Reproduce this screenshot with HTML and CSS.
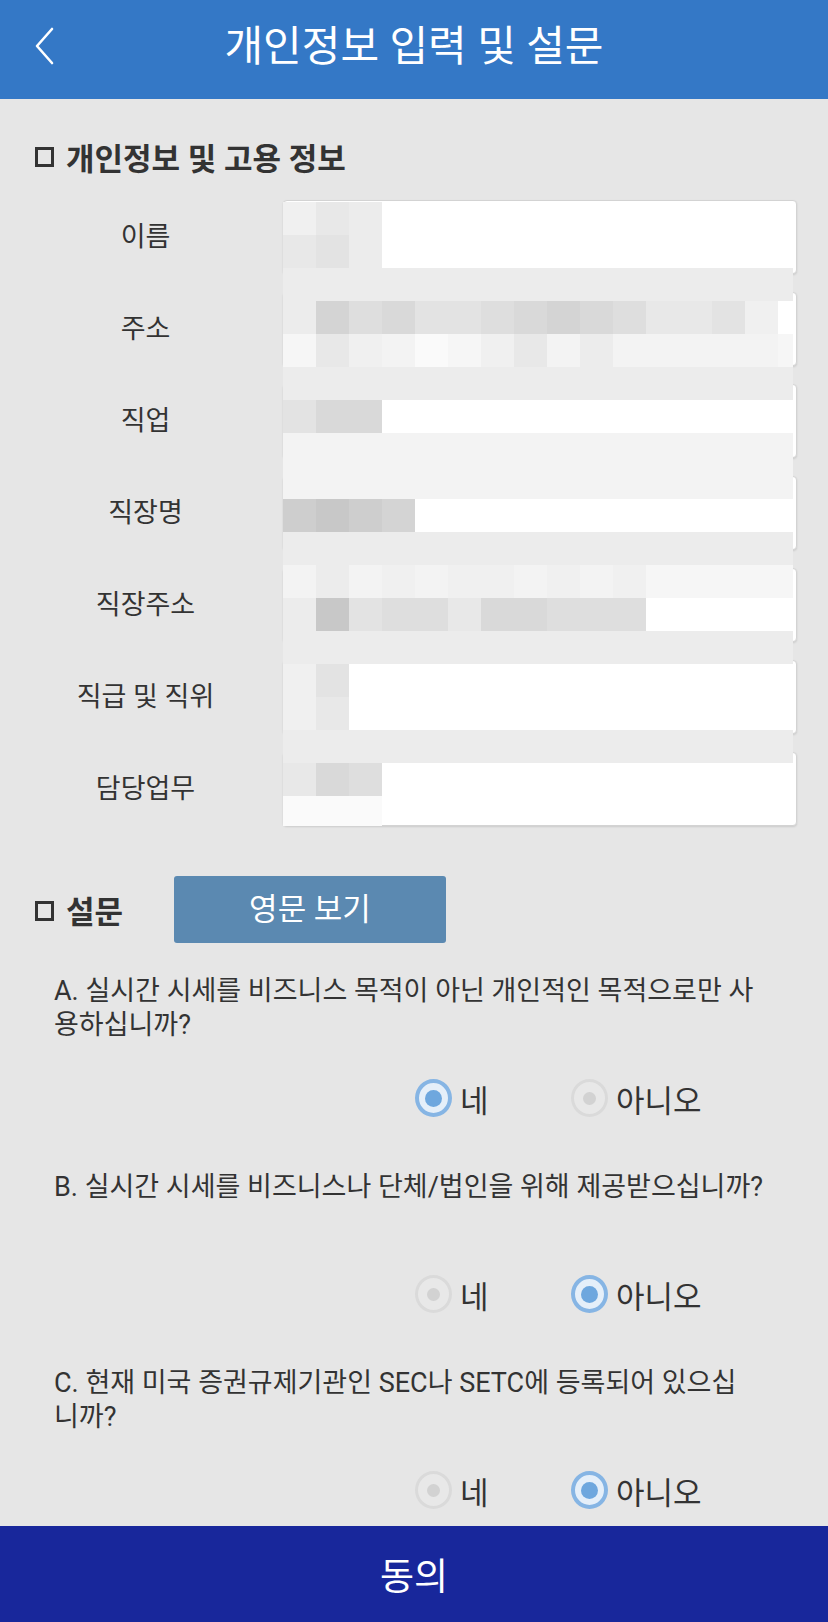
FILE: index.html
```html
<!DOCTYPE html>
<html lang="ko">

<head>
    <meta charset="UTF-8">
    <title>개인정보 입력 및 설문</title>
    <link rel="stylesheet" href="styles.css">
</head>

<body>
<header class="top-bar">
    <button class="back-btn" aria-label="뒤로">
        <svg width="20" height="38" viewBox="0 0 20 38">
            <polyline points="17,2 2,19 17,36" fill="none" stroke="#fff" stroke-width="2.6" stroke-linecap="round" stroke-linejoin="round"/>
        </svg>
    </button>
    <h1 class="top-title">개인정보 입력 및 설문</h1>
</header>

<main class="content">
    <section class="info-section">
        <h2 class="section-title"><span class="check-box"></span>개인정보 및 고용 정보</h2>

        <div class="info-form">
            <div class="form-row"><label class="form-label">이름</label><div class="form-input"></div></div>
            <div class="form-row"><label class="form-label">주소</label><div class="form-input"></div></div>
            <div class="form-row"><label class="form-label">직업</label><div class="form-input"></div></div>
            <div class="form-row"><label class="form-label">직장명</label><div class="form-input"></div></div>
            <div class="form-row"><label class="form-label">직장주소</label><div class="form-input"></div></div>
            <div class="form-row"><label class="form-label">직급 및 직위</label><div class="form-input"></div></div>
            <div class="form-row"><label class="form-label">담당업무</label><div class="form-input"></div></div>

            <!-- 개인정보 모자이크 처리 -->
            <div class="mosaic">
                <div class="m3"></div><div class="m5"></div><div class="m4"></div><div class="gap"></div>
                <div class="m5"></div><div class="m6"></div><div class="m4"></div><div class="gap"></div>
                <div class="m4 band"></div>
                <div class="m4"></div><div class="m9"></div><div class="m7"></div><div class="m8"></div><div class="m6"></div><div class="m6"></div><div class="m7"></div><div class="m8"></div><div class="m9"></div><div class="m8"></div><div class="m7"></div><div class="m5"></div><div class="m5"></div><div class="m6"></div><div class="m3"></div><div class="w"></div>
                <div class="m1"></div><div class="m5"></div><div class="m3"></div><div class="m2"></div><div class="m0"></div><div class="m1"></div><div class="m3"></div><div class="m5"></div><div class="m2"></div><div class="m4"></div><div class="m2"></div><div class="m2"></div><div class="m2"></div><div class="m2"></div><div class="m2"></div><div class="m1"></div>
                <div class="m4 band"></div>
                <div class="m6"></div><div class="m8"></div><div class="m8"></div><div class="gap"></div>
                <div class="m2 band"></div>
                <div class="m2 band"></div>
                <div class="m10"></div><div class="m11"></div><div class="m10"></div><div class="m9"></div><div class="gap"></div>
                <div class="m4 band"></div>
                <div class="m2"></div><div class="m4"></div><div class="m2"></div><div class="m3"></div><div class="m2"></div><div class="m3"></div><div class="m3"></div><div class="m2"></div><div class="m3"></div><div class="m2"></div><div class="m3"></div><div class="m1"></div><div class="m1"></div><div class="m1"></div><div class="m1"></div><div class="m1"></div>
                <div class="m4"></div><div class="m11"></div><div class="m6"></div><div class="m7"></div><div class="m7"></div><div class="m5"></div><div class="m8"></div><div class="m8"></div><div class="m7"></div><div class="m7"></div><div class="m7"></div><div class="gap"></div>
                <div class="m4 band"></div>
                <div class="m3"></div><div class="m6"></div><div class="gap"></div>
                <div class="m3"></div><div class="m5"></div><div class="gap"></div>
                <div class="m4 band"></div>
                <div class="m5"></div><div class="m8"></div><div class="m7"></div><div class="gap"></div>
                <div class="m0"></div><div class="m0"></div><div class="m0"></div><div class="gap"></div>
            </div>
        </div>
    </section>

    <section class="survey-section">
        <div class="survey-head">
            <h2 class="section-title survey-title"><span class="check-box"></span>설문</h2>
            <button class="lang-btn">영문 보기</button>
        </div>

        <div class="question">
            <p class="question-text">A. 실시간 시세를 비즈니스 목적이 아닌 개인적인 목적으로만 사<br>용하십니까?</p>
            <div class="answer-row">
                <label class="radio-option"><span class="radio checked"></span>네</label>
                <label class="radio-option"><span class="radio"></span>아니오</label>
            </div>
        </div>

        <div class="question">
            <p class="question-text">B. 실시간 시세를 비즈니스나 단체/법인을 위해 제공받으십니까?</p>
            <div class="answer-row">
                <label class="radio-option"><span class="radio"></span>네</label>
                <label class="radio-option"><span class="radio checked"></span>아니오</label>
            </div>
        </div>

        <div class="question">
            <p class="question-text">C. 현재 미국 증권규제기관인 SEC나 SETC에 등록되어 있으십<br>니까?</p>
            <div class="answer-row">
                <label class="radio-option"><span class="radio"></span>네</label>
                <label class="radio-option"><span class="radio checked"></span>아니오</label>
            </div>
        </div>
    </section>
</main>

<footer class="agree-bar">동의</footer>
</body>

</html>
```

FILE: styles.css
```css
body {
    font-family: Roboto, "Noto Sans CJK KR", sans-serif;
    margin: 0;
    height: 100vh;
    display: flex;
    flex-direction: column;
    background-color: #e6e6e6;
    color: #333;
}

.top-bar {
    flex: none;
    height: 99px;
    background-color: #3478c6;
    display: flex;
    align-items: center;
    justify-content: center;
    position: relative;
}

.back-btn {
    position: absolute;
    left: 35px;
    top: 27px;
    padding: 0;
    background: none;
    border: none;
    width: 20px;
    height: 38px;
}

.top-title {
    margin: 0 0 6px;
    color: white;
    font-size: 42px;
    font-weight: 400;
    line-height: 1;
}

.content {
    flex: 1;
    overflow: hidden;
    padding: 37px 0 0 0;
}

.section-title {
    display: flex;
    align-items: center;
    margin: 0;
    padding-left: 35px;
    height: 40px;
    font-size: 31px;
    font-weight: 700;
    color: #333;
}

.check-box {
    width: 13px;
    height: 14px;
    border: 3px solid #333;
    margin-right: 12px;
    margin-top: 2px;
}

/* 개인정보 입력 폼 */
.info-form {
    position: relative;
    margin: 24px 31px 0 8px;
    display: flex;
    flex-direction: column;
    gap: 18px;
}

.form-row {
    display: grid;
    grid-template-columns: 275px 1fr;
    align-items: center;
    height: 74px;
}

.form-label {
    text-align: center;
    font-size: 27px;
    color: #333;
    margin-top: -6px;
}

.form-input {
    height: 72px;
    background-color: white;
    border: 1px solid #d3d3d3;
    border-radius: 4px;
    box-shadow: 0 1px 2px rgba(0, 0, 0, 0.12);
}

.mosaic {
    position: absolute;
    left: 275px;
    top: 2px;
    width: 510px;
    height: 624px;
    overflow: hidden;
    display: grid;
    grid-template-columns: repeat(16, 33px);
    grid-auto-rows: 33px;
}

.mosaic .band { grid-column: span 16; }
.mosaic .gap { grid-column: auto / -1; }

.m0 { background-color: #fafafa; }
.m1 { background-color: #f6f6f6; }
.m2 { background-color: #f3f3f3; }
.m3 { background-color: #f0f0f0; }
.m4 { background-color: #ececec; }
.m5 { background-color: #e8e8e8; }
.m6 { background-color: #e3e3e3; }
.m7 { background-color: #dedede; }
.m8 { background-color: #d9d9d9; }
.m9 { background-color: #d4d4d4; }
.m10 { background-color: #cecece; }
.m11 { background-color: #c8c8c8; }
.w { background-color: #ffffff; }

/* 설문 */
.survey-head {
    display: flex;
    align-items: center;
    margin-top: 50px;
}

.survey-title {
    width: 139px;
}

.lang-btn {
    width: 272px;
    height: 67px;
    border: none;
    border-radius: 3px;
    background-color: #5b89b1;
    color: white;
    font-family: inherit;
    font-size: 31px;
    padding: 0 0 6px;
}

.question {
    padding: 0 20px 0 54px;
    margin-top: 31px;
    margin-bottom: 50px;
}

.question-text {
    margin: 0;
    min-height: 68px;
    font-size: 27px;
    line-height: 34px;
    color: #333;
}

.answer-row {
    display: flex;
    height: 44px;
    align-items: center;
    margin-top: 34px;
    padding-left: 361px;
}

.radio-option {
    width: 156px;
    display: flex;
    align-items: center;
    font-size: 31px;
    color: #333;
}

.radio {
    box-sizing: border-box;
    width: 37px;
    height: 38px;
    border-radius: 50%;
    border: 3px solid #dadada;
    background-color: #e8e8e8;
    margin-right: 8px;
    display: flex;
    align-items: center;
    justify-content: center;
}

.radio::after {
    content: "";
    width: 13px;
    height: 13px;
    border-radius: 50%;
    background-color: #d2d2d2;
}

.radio.checked {
    border: 4px solid #86b5e4;
    background-color: #e5eff9;
}

.radio.checked::after {
    width: 17px;
    height: 17px;
    background-color: #6ea7de;
}

.agree-bar {
    flex: none;
    height: 96px;
    background-color: #18279b;
    color: white;
    font-size: 37px;
    display: flex;
    align-items: center;
    justify-content: center;
}
```
